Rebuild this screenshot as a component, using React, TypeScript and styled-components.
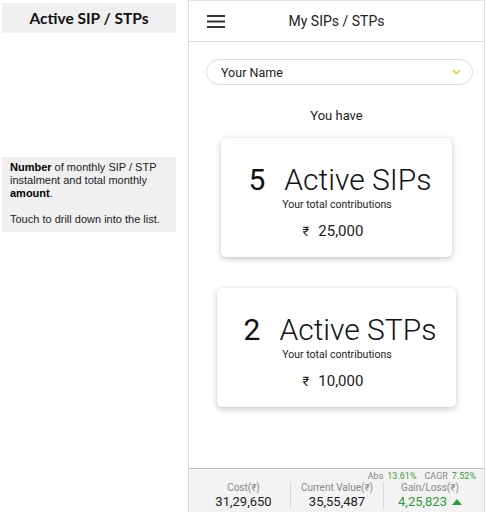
import React from "react";
import styled, { createGlobalStyle } from "styled-components";

const GlobalStyle = createGlobalStyle`
  html, body {
    margin: 0;
    padding: 0;
    background: #ffffff;
  }
  body {
    font-family: "Liberation Sans", Arial, sans-serif;
    color: #222;
  }
`;

interface PlanCard {
  count: number;
  label: string;
  amount: string;
}

const cards: PlanCard[] = [
  { count: 5, label: "Active SIPs", amount: "25,000" },
  { count: 2, label: "Active STPs", amount: "10,000" },
];

const Page = styled.div`
  display: flex;
  width: 487px;
  height: 512px;
  overflow: hidden;
`;

const Notes = styled.div`
  width: 188px;
  flex-shrink: 0;
  display: flex;
  flex-direction: column;
  padding: 3px 0 0 2px;
  box-sizing: border-box;
`;

const NoteTitle = styled.div`
  width: 174px;
  height: 30px;
  background: #f0f0f0;
  font-family: Lato, "Liberation Sans", sans-serif;
  font-weight: 700;
  font-size: 15.5px;
  line-height: 30px;
  text-align: center;
  color: #111;
`;

const NoteBox = styled.div`
  width: 174px;
  margin-top: 124px;
  background: #f0f0f0;
  padding: 4px 4px 6px 8px;
  box-sizing: border-box;
  font-family: "Liberation Sans", Arial, sans-serif;
  font-size: 11px;
  line-height: 13px;
  color: #222;

  p {
    margin: 0;
  }
  p + p {
    margin-top: 13px;
  }
  b {
    color: #000;
  }
`;

const Phone = styled.div`
  width: 297px;
  height: 512px;
  flex-shrink: 0;
  display: flex;
  flex-direction: column;
  border-left: 1px solid #dcdcdc;
  border-right: 1px solid #dcdcdc;
  border-top: 1px solid #e4e4e4;
  box-sizing: border-box;
  font-family: Roboto, "Liberation Sans", sans-serif;
`;

const Header = styled.div`
  height: 40px;
  flex-shrink: 0;
  display: flex;
  align-items: center;
  border-bottom: 1px solid #dedede;
  padding-left: 18px;
`;

const HeaderTitle = styled.div`
  flex: 1;
  text-align: center;
  font-size: 14px;
  color: #222;
  margin-right: 36px;
`;

const Body = styled.div`
  flex: 1;
  display: flex;
  flex-direction: column;
  align-items: center;
  padding-top: 17px;
`;

const Select = styled.div`
  align-self: stretch;
  margin: 0 11px 0 17px;
  height: 24px;
  border: 1px solid #dddddd;
  border-radius: 13px;
  display: flex;
  align-items: center;
  justify-content: space-between;
  padding: 0 11px 0 14px;
  font-size: 12.5px;
  color: #222;
`;

const YouHave = styled.div`
  margin-top: 23px;
  font-size: 13px;
  line-height: 16px;
  color: #222;
`;

const Card = styled.div<{ $first?: boolean }>`
  margin-top: ${(p) => (p.$first ? "14px" : "31px")};
  padding: 24px 20px 15px 27px;
  background: #fff;
  border-radius: 5px;
  box-shadow: 0 2px 6px rgba(0, 0, 0, 0.22), 0 0 1px rgba(0, 0, 0, 0.12);
  display: flex;
  flex-direction: column;
  align-items: center;
`;

const BigLine = styled.div`
  display: flex;
  align-items: baseline;
  font-size: 30px;
  line-height: 36px;
  font-weight: 300;
  color: #111;
  white-space: nowrap;
`;

const Count = styled.span`
  margin-right: 19px;
  font-weight: 400;
`;

const Sub = styled.div`
  font-size: 10.5px;
  line-height: 14px;
  color: #222;
  margin-right: 6px;
`;

const Amount = styled.div`
  margin-top: 9px;
  font-size: 15px;
  line-height: 20px;
  color: #222;
  margin-right: 14px;

  span {
    font-size: 13px;
    margin-right: 9px;
  }
`;

const Footer = styled.div`
  height: 44px;
  flex-shrink: 0;
  background: #f3f3f3;
  border-top: 1px solid #bdbdbd;
  box-sizing: border-box;
  padding: 1px 8px 0 8px;
  display: flex;
  flex-direction: column;
`;

const Ratios = styled.div`
  text-align: right;
  font-size: 9px;
  line-height: 12px;
  color: #888;

  em {
    font-style: normal;
    color: #3a9c3a;
    margin-left: 4px;
  }
  em + span {
    margin-left: 8px;
  }
`;

const Columns = styled.div`
  display: grid;
  grid-template-columns: repeat(3, 1fr);
`;

const Column = styled.div<{ $divider?: boolean }>`
  text-align: center;
  border-left: ${(p) => (p.$divider ? "1px solid #d6d6d6" : "none")};
  margin-bottom: 4px;
`;

const ColLabel = styled.div`
  font-size: 10px;
  line-height: 12px;
  color: #888;
`;

const ColValue = styled.div<{ $green?: boolean }>`
  font-size: 13px;
  line-height: 15px;
  color: ${(p) => (p.$green ? "#2f9a3a" : "#222")};
  display: flex;
  justify-content: center;
  align-items: center;
  gap: 5px;
`;

const Hamburger = () => (
  <svg width="18" height="13" viewBox="0 0 18 13">
    <rect x="0" y="0" width="18" height="2" fill="#333" />
    <rect x="0" y="5.5" width="18" height="2" fill="#333" />
    <rect x="0" y="11" width="18" height="2" fill="#333" />
  </svg>
);

const Chevron = () => (
  <svg width="9" height="6" viewBox="0 0 9 6">
    <polyline points="1,1 4.5,4.5 8,1" fill="none" stroke="#e3cf3a" strokeWidth="1.6" />
  </svg>
);

const UpArrow = () => (
  <svg width="10" height="6" viewBox="0 0 10 6">
    <polygon points="0,6 5,0 10,6" fill="#2f9a3a" />
  </svg>
);

export default function App() {
  return (
    <Page>
      <GlobalStyle />
      <Notes>
        <NoteTitle>Active SIP / STPs</NoteTitle>
        <NoteBox>
          <p>
            <b>Number</b> of monthly SIP / STP instalment and total monthly{" "}
            <b>amount</b>.
          </p>
          <p>Touch to drill down into the list.</p>
        </NoteBox>
      </Notes>
      <Phone>
        <Header>
          <Hamburger />
          <HeaderTitle>My SIPs / STPs</HeaderTitle>
        </Header>
        <Body>
          <Select>
            <span>Your Name</span>
            <Chevron />
          </Select>
          <YouHave>You have</YouHave>
          {cards.map((c, i) => (
            <Card key={c.label} $first={i === 0}>
              <BigLine>
                <Count>{c.count}</Count>
                {c.label}
              </BigLine>
              <Sub>Your total contributions</Sub>
              <Amount>
                <span>₹</span>
                {c.amount}
              </Amount>
            </Card>
          ))}
        </Body>
        <Footer>
          <Ratios>
            Abs<em>13.61%</em>
            <span>CAGR</span>
            <em>7.52%</em>
          </Ratios>
          <Columns>
            <Column>
              <ColLabel>Cost(₹)</ColLabel>
              <ColValue>31,29,650</ColValue>
            </Column>
            <Column $divider>
              <ColLabel>Current Value(₹)</ColLabel>
              <ColValue>35,55,487</ColValue>
            </Column>
            <Column $divider>
              <ColLabel>Gain/Loss(₹)</ColLabel>
              <ColValue $green>
                4,25,823
                <UpArrow />
              </ColValue>
            </Column>
          </Columns>
        </Footer>
      </Phone>
    </Page>
  );
}
